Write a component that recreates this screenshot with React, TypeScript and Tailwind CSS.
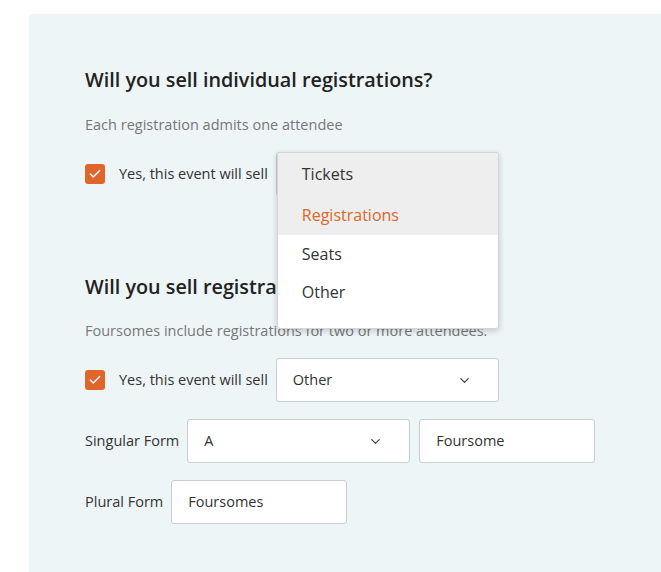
import { Check, ChevronDown } from 'lucide-react'

const menuOptions = [
  { label: 'Tickets', hovered: true },
  { label: 'Registrations', hovered: true, selected: true },
  { label: 'Seats' },
  { label: 'Other' }
]

function CheckBox() {
  return (
    <span className="flex h-5 w-5 shrink-0 items-center justify-center rounded-[3px] bg-[#e0652a]">
      <Check size={14} strokeWidth={2.5} className="text-white" />
    </span>
  )
}

function SelectBox({ value, className = '' }: { value: string; className?: string }) {
  return (
    <div className={`flex h-[44px] w-[223px] items-center justify-between rounded-[3px] border border-[#c9ced3] bg-white pl-4 pr-[26px] text-[14.5px] text-[#333] ${className}`}>
      <span>{value}</span>
      <ChevronDown size={15} strokeWidth={2} className="text-[#444]" />
    </div>
  )
}

function TextBox({ value }: { value: string }) {
  return (
    <div className="flex h-[44px] w-[176px] items-center rounded-[3px] border border-[#c9ced3] bg-white px-4 text-[14.5px] text-[#333]">
      {value}
    </div>
  )
}

export default function App() {
  return (
    <div className="h-[572px] w-[661px] overflow-hidden bg-white pl-[29px] pt-[14px] font-['Open_Sans',sans-serif]">
      <div className="h-[600px] rounded-tl-[4px] bg-[#eef5f7] pl-[56px] pt-[54px]">
        <h2 className="text-[19.8px] font-semibold leading-[24px] text-[#222]">Will you sell individual registrations?</h2>
        <p className="mt-[23px] text-[14.5px] leading-[20px] text-[#777]">Each registration admits one attendee</p>

        <div className="mt-[17px] flex items-center">
          <CheckBox />
          <span className="ml-[14px] text-[14.5px] text-[#333]">Yes, this event will sell</span>
          <div className="relative ml-2">
            <SelectBox value="Registrations" />
            <div className="absolute left-px top-0 z-10 w-[222px] overflow-hidden rounded-[3px] border border-[#d3d6d9] bg-white pb-[17px] shadow-[0_2px_6px_rgba(0,0,0,0.18)]">
              {menuOptions.map(opt => (
                <div
                  key={opt.label}
                  className={`flex items-center px-6 text-[16px] ${opt.hovered ? 'h-[41px] bg-[#eeeeee]' : 'h-[38px]'} ${opt.selected ? 'text-[#e0652a]' : 'text-[#333]'}`}
                >
                  {opt.label}
                </div>
              ))}
            </div>
          </div>
        </div>

        <h2 className="mt-[79px] text-[19.8px] font-semibold leading-[24px] text-[#222]">Will you sell registrations in Foursomes?</h2>
        <p className="mt-[22px] text-[14.5px] leading-[20px] text-[#777]">Foursomes include registrations for two or more attendees.</p>

        <div className="mt-[17px] flex items-center">
          <CheckBox />
          <span className="ml-[14px] text-[14.5px] text-[#333]">Yes, this event will sell</span>
          <SelectBox value="Other" className="ml-2" />
        </div>

        <div className="mt-[17px] flex items-center gap-2">
          <span className="text-[14.5px] text-[#333]">Singular Form</span>
          <SelectBox value="A" />
          <div className="ml-px">
            <TextBox value="Foursome" />
          </div>
        </div>

        <div className="mt-[17px] flex items-center gap-2">
          <span className="text-[14.5px] text-[#333]">Plural Form</span>
          <TextBox value="Foursomes" />
        </div>
      </div>
    </div>
  )
}
